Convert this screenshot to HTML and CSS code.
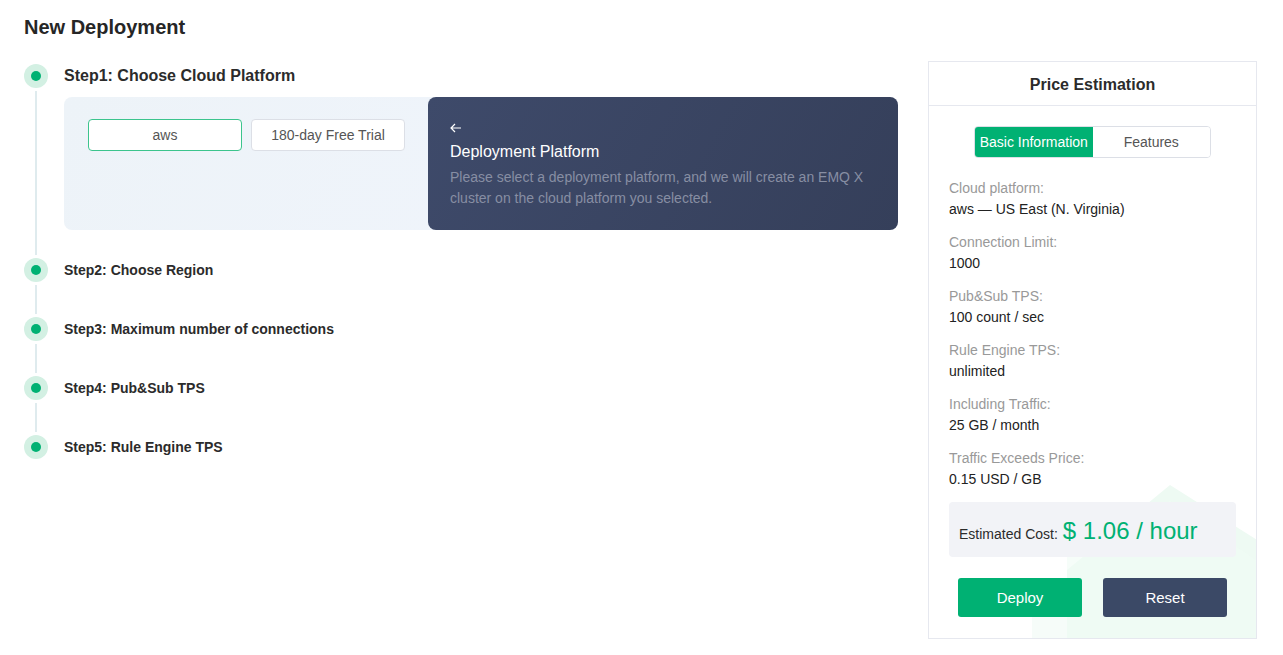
FILE: index.html
```html
<!DOCTYPE html>
<html lang="en">
<head>
<meta charset="utf-8">
<title>New Deployment</title>
<link rel="stylesheet" href="styles.css">
</head>
<body>
<div class="page">
  <main class="main">
    <h1 class="page-title">New Deployment</h1>
    <div class="steps">
      <div class="step">
        <div class="rail"><span class="dot"></span><span class="rail-line"></span></div>
        <div class="step-body step-body-open">
          <div class="step-title step-title-lg">Step1: Choose Cloud Platform</div>
          <div class="panel">
            <div class="panel-options">
              <button class="opt opt-active">aws</button>
              <button class="opt">180-day Free Trial</button>
            </div>
            <div class="panel-help">
              <svg class="back" width="12" height="10" viewBox="0 0 12 10"><path d="M11 5H1.5M5 1L1 5l4 4" fill="none" stroke="#ffffff" stroke-width="1.2"/></svg>
              <div class="help-title">Deployment Platform</div>
              <p class="help-desc">Please select a deployment platform, and we will create an EMQ X cluster on the cloud platform you selected.</p>
            </div>
          </div>
        </div>
      </div>
      <div class="step">
        <div class="rail"><span class="dot"></span><span class="rail-line"></span></div>
        <div class="step-body"><div class="step-title">Step2: Choose Region</div></div>
      </div>
      <div class="step">
        <div class="rail"><span class="dot"></span><span class="rail-line"></span></div>
        <div class="step-body"><div class="step-title">Step3: Maximum number of connections</div></div>
      </div>
      <div class="step">
        <div class="rail"><span class="dot"></span><span class="rail-line"></span></div>
        <div class="step-body"><div class="step-title">Step4: Pub&amp;Sub TPS</div></div>
      </div>
      <div class="step">
        <div class="rail"><span class="dot"></span></div>
        <div class="step-body step-body-last"><div class="step-title">Step5: Rule Engine TPS</div></div>
      </div>
    </div>
  </main>

  <aside class="card">
    <svg class="card-bg" width="329" height="580" viewBox="0 0 329 580">
      <polygon points="104,580 104,548 139,527 139,580" fill="#f6fcf9"/>
      <polygon points="139,580 139,509 242,424 329,479 329,580" fill="#eefaf3"/>
      <polygon points="139,580 139,492 242,440 329,500 329,580" fill="#f0fbf5" opacity="0.6"/>
    </svg>
    <div class="card-head">Price Estimation</div>
    <div class="card-body">
      <div class="tabs">
        <span class="tab tab-active">Basic Information</span>
        <span class="tab">Features</span>
      </div>
      <dl class="info">
        <div class="info-item"><dt>Cloud platform:</dt><dd>aws — US East (N. Virginia)</dd></div>
        <div class="info-item"><dt>Connection Limit:</dt><dd>1000</dd></div>
        <div class="info-item"><dt>Pub&amp;Sub TPS:</dt><dd>100 count / sec</dd></div>
        <div class="info-item"><dt>Rule Engine TPS:</dt><dd>unlimited</dd></div>
        <div class="info-item"><dt>Including Traffic:</dt><dd>25 GB / month</dd></div>
        <div class="info-item"><dt>Traffic Exceeds Price:</dt><dd>0.15 USD / GB</dd></div>
      </dl>
      <div class="cost">
        <span class="cost-label">Estimated Cost:</span>
        <span class="cost-value">$ 1.06 / hour</span>
      </div>
      <div class="actions">
        <button class="btn btn-deploy">Deploy</button>
        <button class="btn btn-reset">Reset</button>
      </div>
    </div>
  </aside>
</div>
</body>
</html>
```

FILE: styles.css
```css
* { box-sizing: border-box; }

html, body {
  margin: 0;
  padding: 0;
  background: #ffffff;
  font-family: "Liberation Sans", Arial, sans-serif;
  color: #333333;
}

.page {
  display: flex;
  align-items: flex-start;
  gap: 30px;
  padding: 0 26px 0 24px;
}

.main {
  flex: 1;
  min-width: 0;
}

.page-title {
  margin: 0;
  padding-top: 13px;
  font-size: 20px;
  line-height: 28px;
  font-weight: 700;
  color: #262626;
}

.steps {
  margin-top: 23px;
}

.step {
  display: flex;
  gap: 16px;
}

.rail {
  width: 24px;
  flex: none;
  display: flex;
  flex-direction: column;
  align-items: center;
}

.dot {
  width: 24px;
  height: 24px;
  border-radius: 50%;
  background: #d3f0e3;
  display: flex;
  align-items: center;
  justify-content: center;
  flex: none;
}

.dot::after {
  content: "";
  width: 10px;
  height: 10px;
  border-radius: 50%;
  background: #00b173;
}

.rail-line {
  flex: 1;
  width: 2px;
  background: #dfebee;
  margin: 3px 0;
}

.step-body {
  flex: 1;
  padding-bottom: 35px;
}

.step-body-open {
  padding-bottom: 28px;
}

.step-body-last {
  padding-bottom: 0;
}

.step-title {
  font-size: 14px;
  line-height: 24px;
  font-weight: 700;
  color: #2b2b2b;
}

.step-title-lg {
  font-size: 16px;
}

.panel {
  margin-top: 9px;
  display: flex;
  height: 133px;
  border-radius: 8px;
  background: linear-gradient(120deg, #edf3f8 0%, #f1f5fd 100%);
}

.panel-options {
  width: 364px;
  flex: none;
  display: flex;
  align-items: flex-start;
  gap: 9px;
  padding: 22px 0 0 24px;
}

.opt {
  width: 154px;
  height: 32px;
  border: 1px solid #dcdfe6;
  border-radius: 4px;
  background: #ffffff;
  font-family: inherit;
  font-size: 14px;
  color: #555555;
  padding: 0;
}

.opt-active {
  border-color: #3cc48d;
}

.panel-help {
  flex: 1;
  border-radius: 8px;
  background: linear-gradient(120deg, #3e4a6a 0%, #353f5a 100%);
  padding: 26px 22px 0 22px;
}

.back {
  display: block;
  margin-bottom: 8px;
}

.help-title {
  font-size: 16px;
  line-height: 22px;
  color: #ffffff;
}

.help-desc {
  margin: 4px 0 0;
  font-size: 14px;
  line-height: 21px;
  color: #878ea3;
}

.card {
  position: relative;
  overflow: hidden;
  width: 329px;
  flex: none;
  margin-top: 61px;
  border: 1px solid #e6e8ef;
  background: #ffffff;
}

.card-bg {
  position: absolute;
  left: -1px;
  top: -1px;
  pointer-events: none;
}

.card-head {
  position: relative;
  height: 44px;
  line-height: 45px;
  text-align: center;
  font-size: 16px;
  font-weight: 700;
  color: #2b2b2b;
  border-bottom: 1px solid #e6e8ef;
}

.card-body {
  position: relative;
  padding: 20px 20px 21px 20px;
}

.tabs {
  display: flex;
  width: 237px;
  height: 32px;
  margin: 0 auto;
  border: 1px solid #dcdfe6;
  border-radius: 4px;
  overflow: hidden;
}

.tab {
  flex: 1;
  display: flex;
  align-items: center;
  justify-content: center;
  font-size: 14px;
  color: #555555;
  background: #ffffff;
}

.tab-active {
  background: #00b173;
  color: #ffffff;
}

.info {
  margin: 20px 0 0;
}

.info-item {
  margin-bottom: 12px;
}

.info dt {
  font-size: 14px;
  line-height: 21px;
  color: #999999;
}

.info dd {
  margin: 0;
  font-size: 14px;
  line-height: 21px;
  color: #222222;
}

.cost {
  height: 55px;
  background: #f2f3f7;
  border-radius: 4px;
  display: flex;
  align-items: baseline;
  gap: 5px;
  padding: 15px 10px 0 10px;
}

.cost-label {
  font-size: 14px;
  color: #2b2b2b;
}

.cost-value {
  font-size: 24px;
  color: #00b173;
}

.actions {
  margin-top: 21px;
  display: flex;
  justify-content: center;
  gap: 21px;
}

.btn {
  width: 124px;
  height: 39px;
  border: none;
  border-radius: 3px;
  font-family: inherit;
  font-size: 15px;
  color: #ffffff;
  padding: 0;
}

.btn-deploy {
  background: #00b173;
}

.btn-reset {
  background: #3b4966;
}
```
